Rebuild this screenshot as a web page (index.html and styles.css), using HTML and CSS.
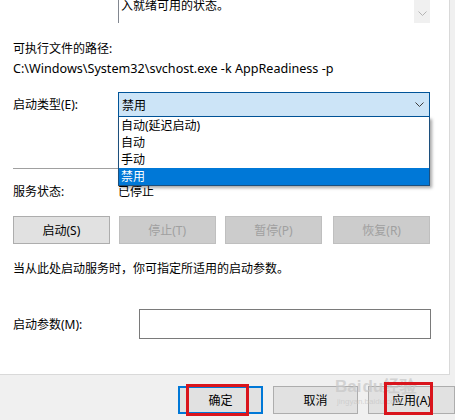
FILE: index.html
```html
<!DOCTYPE html>
<html lang="zh">
<head>
<meta charset="utf-8">
<link rel="stylesheet" href="styles.css">
</head>
<body>
<div class="window">
  <div class="panel">
    <div class="desc-row">
      <div class="desc-box">
        <div class="desc-text">入就绪可用的状态。</div>
        <div class="scroll">
          <svg width="9" height="6" viewBox="0 0 9 6"><path d="M0.5 0.5 L4.5 4.5 L8.5 0.5" fill="none" stroke="#b4b4b4" stroke-width="1"/></svg>
        </div>
      </div>
    </div>
    <div class="label path-label">可执行文件的路径:</div>
    <div class="path">C:\Windows\System32\svchost.exe -k AppReadiness -p</div>

    <div class="combo-row">
      <div class="row-label">启动类型(E):</div>
      <div class="combo">
        <span>禁用</span>
        <svg width="9" height="6" viewBox="0 0 9 6"><path d="M0.5 0.5 L4.5 4.5 L8.5 0.5" fill="none" stroke="#3c3c3c" stroke-width="1"/></svg>
      </div>
      <ul class="dropdown">
        <li>自动(延迟启动)</li>
        <li>自动</li>
        <li>手动</li>
        <li class="sel">禁用</li>
      </ul>
    </div>

    <div class="sep"></div>

    <div class="status-row">
      <div class="row-label">服务状态:</div>
      <div class="status">已停止</div>
    </div>

    <div class="btn-row">
      <div class="btn">启动(S)</div>
      <div class="btn dis">停止(T)</div>
      <div class="btn dis">暂停(P)</div>
      <div class="btn dis">恢复(R)</div>
    </div>

    <div class="hint">当从此处启动服务时，你可指定所适用的启动参数。</div>

    <div class="param-row">
      <div class="param-label">启动参数(M):</div>
      <div class="input"></div>
    </div>
  </div>

  <div class="footer">
    <div class="fbtn ok">确定<span class="redbox rb1"></span></div>
    <div class="fbtn">取消</div>
    <div class="fbtn apply">应用(A)<span class="redbox rb2"></span></div>
    <div class="watermark"><span class="wm-big">Bai<span class="paw">du</span>经验</span><span class="wm-small">jingyan.baidu.com</span></div>
  </div>
</div>
</body>
</html>
```

FILE: styles.css
```css
* { box-sizing: border-box; }
html, body { margin: 0; padding: 0; }
body {
  width: 455px;
  height: 420px;
  overflow: hidden;
  background: #f0f0f0;
  font-family: "Noto Sans", "Noto Sans CJK SC", sans-serif;
  font-size: 12px;
  color: #000;
}
.window { width: 455px; height: 420px; display: flex; flex-direction: column; position: relative; }
.panel {
  width: 450px;
  height: 375px;
  background: #fff;
  border-right: 1px solid #d9d9d9;
  border-bottom: 1px solid #d9d9d9;
  padding-left: 13px;
  display: flex;
  flex-direction: column;
}
.desc-row { height: 23px; padding-left: 105px; }
.desc-box {
  width: 312px;
  height: 23px;
  border-left: 1px solid #828790;
  display: flex;
  justify-content: space-between;
}
.desc-text { margin-top: -3px; padding-left: 2px; line-height: 17px; }
.scroll {
  width: 16px;
  height: 23px;
  background: #f0f0f0;
  display: flex;
  align-items: flex-end;
  justify-content: center;
  padding-bottom: 6px;
}
.label, .path { line-height: 17px; }
.path-label { margin-top: 17px; }
.path { margin-top: 3px; font-size: 12.6px; }

.combo-row {
  margin-top: 15px;
  height: 25px;
  display: flex;
  align-items: center;
  position: relative;
}
.row-label { width: 105px; line-height: 17px; }
.combo {
  width: 312px;
  height: 25px;
  background: #cce4f7;
  border: 1px solid #005499;
  display: flex;
  align-items: center;
  justify-content: space-between;
  padding: 0 5px 0 3px;
}
.dropdown {
  position: absolute;
  left: 105px;
  top: 25px;
  width: 312px;
  margin: 0;
  padding: 0;
  list-style: none;
  background: #fff;
  border: 1px solid #1c4f7d;
  border-top: none;
  box-shadow: 2px 2px 3px rgba(0,0,0,0.35);
  z-index: 2;
}
.dropdown li { height: 17px; line-height: 17px; padding-left: 2px; }
.dropdown li.sel { background: #0078d7; color: #fff; }

.sep { margin-top: 51px; width: 417px; height: 1px; background: #a0a0a0; }

.status-row { margin-top: 14px; display: flex; align-items: center; height: 17px; }
.status { line-height: 17px; }

.btn-row { margin-top: 16px; display: flex; gap: 9px; width: 417px; }
.btn {
  width: 97px;
  height: 28px;
  display: flex;
  align-items: center;
  justify-content: center;
  background: #e1e1e1;
  border: 1px solid #adadad;
}
.btn-row .btn:nth-child(3) { width: 98px; }
.btn-row .btn:nth-child(4) { margin-left: 2px; }
.btn.dis { background: #cccccc; border-color: #bfbfbf; color: #a0a0a0; }

.hint { margin-top: 16px; line-height: 17px; }

.param-row { margin-top: 32px; display: flex; align-items: center; height: 30px; }
.param-label { width: 126px; line-height: 17px; }
.input { width: 292px; height: 30px; border: 1px solid #7a7a7a; background: #fff; }

.footer {
  flex: 1;
  position: relative;
  display: flex;
  align-items: flex-start;
  padding: 11px 0 0 178px;
  gap: 10px;
}
.fbtn {
  position: relative;
  width: 86px;
  height: 28px;
  display: flex;
  align-items: center;
  justify-content: center;
  background: #e1e1e1;
  border: 1px solid #adadad;
}
.fbtn.ok { border: 2px solid #0078d7; }
.fbtn.apply { width: 88px; }
.redbox {
  position: absolute;
  border: 3px solid #d9141c;
  z-index: 3;
}
.rb1 { left: 6px; top: -4px; width: 63px; height: 32px; }
.rb2 { left: 15px; top: -5px; width: 49px; height: 33px; }
.watermark {
  position: absolute;
  left: 335px;
  top: 2px;
  display: flex;
  flex-direction: column;
  color: rgba(200,200,200,0.75);
  z-index: 2;
  pointer-events: none;
}
.wm-big { font-family: "Liberation Sans", sans-serif; font-size: 17px; font-weight: bold; line-height: 20px; }
.wm-big .paw { margin-left: 1px; }
.wm-small { font-family: "Liberation Sans", sans-serif; font-size: 8px; line-height: 10px; margin-left: 2px; }
```
